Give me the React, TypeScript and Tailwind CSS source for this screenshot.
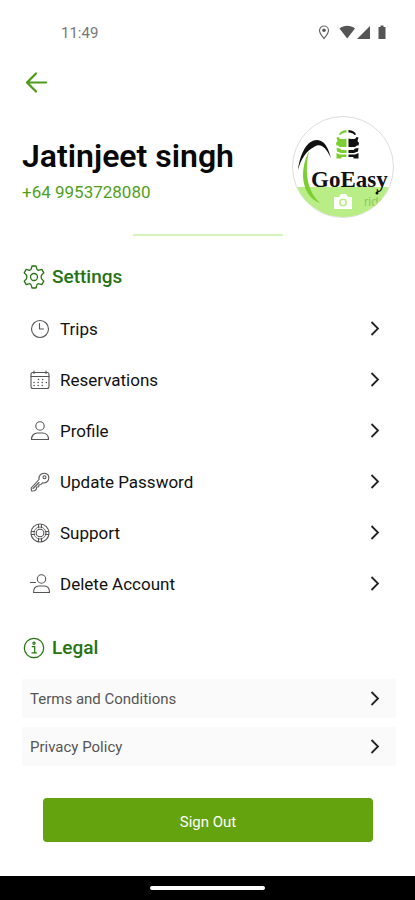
import type { ReactNode } from 'react'

const SettingsIcon = () => (
  <svg viewBox="0 0 24 24" className="size-6 shrink-0" fill="none" stroke="currentColor" strokeWidth="1.3" strokeLinejoin="round">
    <path d="M9.300 3.600 10 1h4l.7 2.600c.3 1.300 1.300 1.900 2.500 1.500l2.600-.7 2 3.500-1.900 1.800c-1 1-1 3.600 0 4.600l1.900 1.800-2 3.500-2.600-.7c-1.200-.4-2.200.2-2.500 1.500L14 23h-4l-.7-2.600c-.3-1.300-1.300-1.900-2.500-1.500l-2.600.7-2-3.500 1.900-1.800c1-1 1-3.600 0-4.600L2.200 7.900l2-3.500 2.600.7c1.200.4 2.200-.2 2.500-1.500z" />
    <circle cx="12" cy="12" r="3.500" />
  </svg>
)

const InfoIcon = () => (
  <svg viewBox="0 0 24 24" className="size-6 shrink-0" fill="none" stroke="currentColor" strokeWidth="1.2">
    <circle cx="12" cy="12" r="9.700" />
    <circle cx="12" cy="7.200" r="1.100" />
    <path d="M9.700 10.600h3v6M9.500 16.800h5.400" />
  </svg>
)

const RowIcon = ({ children }: { children: ReactNode }) => (
  <svg viewBox="0 0 20 20" className="size-5 shrink-0 text-[#555]" fill="none" stroke="currentColor" strokeWidth="1.1" strokeLinecap="round" strokeLinejoin="round">
    {children}
  </svg>
)

const Chevron = () => (
  <svg viewBox="0 0 20 20" className="size-5 shrink-0 text-[#222]" fill="none" stroke="currentColor" strokeWidth="1.8">
    <path d="M6.500 3 13 9.500 6.500 16" />
  </svg>
)

const settings = [
  {
    label: 'Trips',
    icon: (
      <>
        <circle cx="10" cy="10" r="8.500" />
        <path d="M9.500 4.500V10h4" />
      </>
    ),
  },
  {
    label: 'Reservations',
    icon: (
      <>
        <rect x="1" y="2.500" width="18" height="16" rx="2" />
        <path d="M1 6.500h18M4 1v2.500M16 1v2.500" />
        <path d="M8.500 9.500h8M4 12.500h12.500M4 15.500h9" strokeWidth="1.500" strokeDasharray="0.100 4" />
      </>
    ),
  },
  {
    label: 'Profile',
    icon: (
      <>
        <circle cx="10" cy="5" r="4.200" />
        <path d="M1.500 18.500c0-4 2.500-6.500 6-6.500h5c3.500 0 6 2.500 6 6.500z" />
      </>
    ),
  },
  {
    label: 'Update Password',
    icon: (
      <>
        <path d="M9 7.500C8.500 4 11 1 14.500 1.200c3 .2 4.700 2.300 4.300 5.300-.4 3-3 5-6.300 4.300L11 12.500 9 12.700l-.3 2-2 .3-.3 2-1.900 1.800-3 .2-.3-3z" />
        <circle cx="14.500" cy="5.300" r="1.500" />
        <path d="m3 16.500 6-6" />
      </>
    ),
  },
  {
    label: 'Support',
    icon: (
      <>
        <circle cx="10" cy="10" r="9" />
        <circle cx="10" cy="10" r="6" strokeWidth="0.800" />
        <circle cx="10" cy="10" r="3.800" />
        <path d="M8.500 1.200v3.500M11.500 1.200v3.500M8.500 15.300v3.500M11.500 15.300v3.500M1.200 8.500h3.500M1.200 11.500h3.500M15.300 8.500h3.500M15.300 11.500h3.500" />
      </>
    ),
  },
  {
    label: 'Delete Account',
    icon: (
      <>
        <circle cx="11.500" cy="5" r="4.200" />
        <path d="M3.500 18.500c0-4 2-6.500 5.500-6.500h5c3.500 0 5.500 2.500 5.500 6.500zM0.500 8.500h5" />
      </>
    ),
  },
]

const legal = ['Terms and Conditions', 'Privacy Policy']

function StatusBar() {
  return (
    <div className="flex h-[18px] items-center justify-between pl-[61px] pr-7">
      <span className="text-[15px] leading-[18px] text-[#777]">11:49</span>
      <svg viewBox="0 0 70 18" className="h-[18px] w-[70px]" fill="#555">
        <path d="M7 14.500C4.500 11.500 2.500 9.200 2.500 6.500a4.500 4.500 0 0 1 9 0c0 2.700-2 5-4.500 8z" fill="none" stroke="#666" strokeWidth="1.200" />
        <circle cx="7" cy="6.300" r="1.800" />
        <path d="M22.500 4.500c4.500-3.800 11-3.800 15.500 0L30.200 14.500z" />
        <path d="M53 2v13H40z" />
        <path d="M61.500 3h2V1.500h3V3h2v12h-7z" />
      </svg>
    </div>
  )
}

// one half of the car in the logo, mirrored for the other side
const CarHalf = () => (
  <path d="M10.500 0Q4 .5 3 4.500L4.500 5Q6 2.500 10.500 2.500zM.500 7.500l2-.5 1 1.500Q6 9.500 10.500 8.500V17H4L2 15.500H.500L0 13l1.500-2zM.500 18l3.500.5 1.500 1.500h5v3H5L1 21.500zM.500 23l3.500 1.500h6.500V27H5.500v1.500H.500z" />
)

function Avatar() {
  return (
    <button type="button" aria-label="Change photo" className="size-[102px] shrink-0 overflow-hidden rounded-full border border-[#ddd] bg-white">
      <svg viewBox="0 0 100 100" className="size-full">
        <path d="M0 70h100v30H0z" fill="#b9ee86" />
        <path d="M5 53C8 28 21 17 31 26c3 3 5 8 7 15-6-12-11-15-17-11C13 34 8 42 5 53z" fill="#111" />
        <path d="M16 34C6 53 8 79 27 86 15 75 11 57 16 34z" fill="#7bcf32" />
        <g transform="translate(43 13)" fill="#7bcf32">
          <CarHalf />
        </g>
        <g transform="translate(66 13) scale(-1 1)" fill="#111">
          <CarHalf />
        </g>
        <text x="18" y="70" fontSize="23" fontWeight="700" fill="#111" className="font-['Liberation_Serif',serif]">GoEasy</text>
        <circle cx="84" cy="76" r="1.500" fill="#111" />
        <text x="71" y="89" fontSize="13" fill="#8fc95c" className="font-['Liberation_Sans',sans-serif]">ride</text>
        <path d="M41 80h5l2-3h5l2 3h4v12H41z" fill="#fff" />
        <circle cx="50" cy="85.500" r="3.200" fill="none" stroke="#b9ee86" strokeWidth="1.500" />
      </svg>
    </button>
  )
}

export default function App() {
  return (
    <div className="flex min-h-screen flex-col bg-white pt-6 font-[Roboto,sans-serif]">
      <StatusBar />

      <main className="flex flex-col pl-[22px] pr-[19px]">
        <button type="button" aria-label="Back" className="mt-7 flex size-6 items-center text-[#4b9b14]">
          <svg viewBox="0 0 24 24" className="ml-0.5 size-6 shrink-0" fill="none" stroke="currentColor" strokeWidth="2.200" strokeLinecap="round" strokeLinejoin="round">
            <path d="M22 12.500H3M12 3.500 3 12.500l9 9" />
          </svg>
        </button>

        <section className="mt-[22px] flex items-center justify-between pr-0.5">
          <div className="pt-[10px]">
            <h1 className="text-[32px] font-semibold leading-10 text-[#080808]">Jatinjeet singh</h1>
            <p className="text-[17px] leading-8 text-[#4f9f1c]">+64 9953728080</p>
          </div>
          <Avatar />
        </section>

        <hr className="ml-[111px] mt-4 h-0.5 w-[150px] border-0 bg-[#d5f3bd]" />

        <h2 className="mt-7 flex h-6 items-center gap-[6px] pt-px text-[19px] font-medium leading-6 text-[#267312]">
          <SettingsIcon />
          Settings
        </h2>
        <nav className="mt-[15px]">
          {settings.map(item => (
            <a key={item.label} href="#" className="flex h-[51px] items-center pl-2 pr-[11px]">
              <RowIcon>{item.icon}</RowIcon>
              <span className="ml-[10px] flex-1 pt-0.5 text-[17px] text-[#111]">{item.label}</span>
              <Chevron />
            </a>
          ))}
        </nav>

        <h2 className="mt-[26px] flex h-6 items-center gap-[6px] pt-px text-[19px] font-medium leading-6 text-[#267312]">
          <InfoIcon />
          Legal
        </h2>
        <nav className="mt-5 flex flex-col gap-[9px]">
          {legal.map(label => (
            <a key={label} href="#" className="flex h-[39px] items-center justify-between bg-[#fafafa] pl-2 pr-[11px] text-[15px] text-[#555]">
              <span className="pt-0.5">{label}</span>
              <Chevron />
            </a>
          ))}
        </nav>

        <button type="button" className="ml-[21px] mr-[23px] mt-8 h-[44px] rounded bg-[#64a30d] pt-1 text-[15px] text-white">
          Sign Out
        </button>
      </main>

      <footer className="mt-auto flex h-6 items-center justify-center bg-black">
        <div className="h-1 w-[115px] rounded-full bg-white" />
      </footer>
    </div>
  )
}
